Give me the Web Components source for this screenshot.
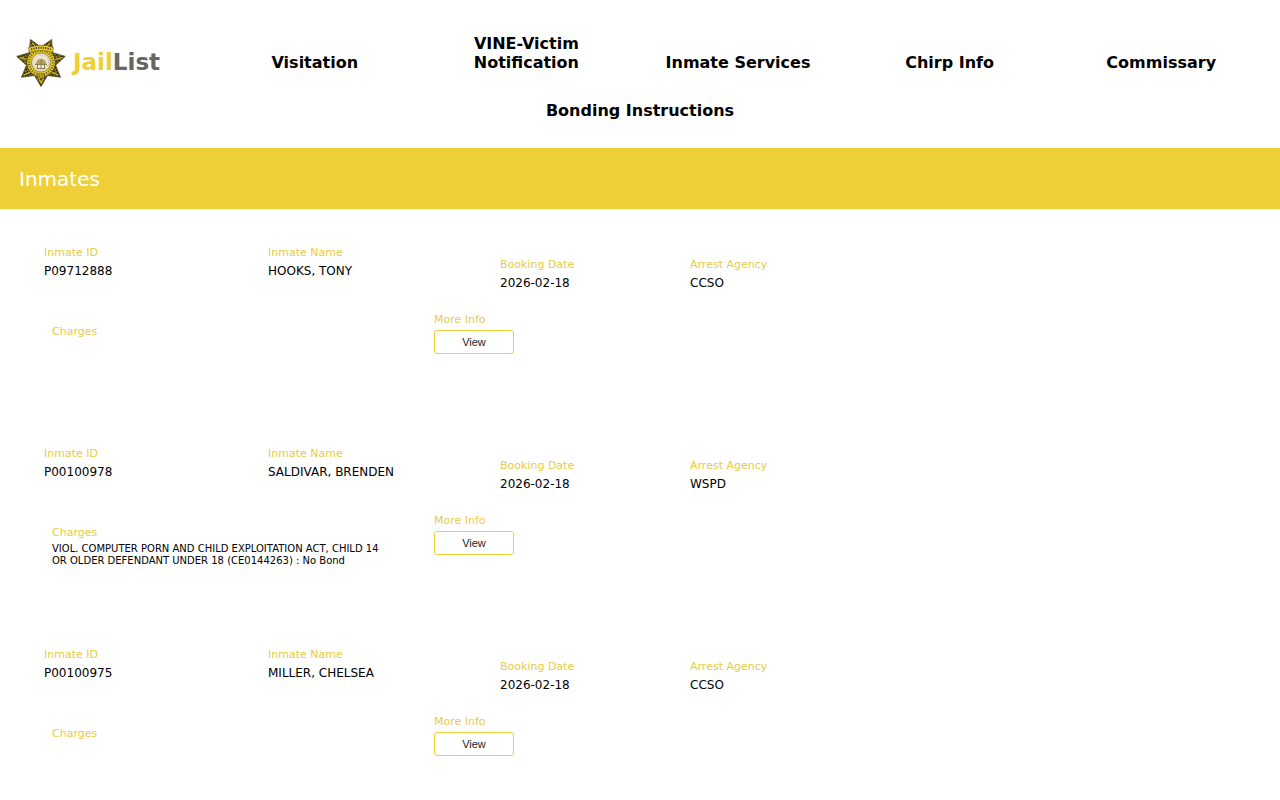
<!DOCTYPE html>
<html lang="en">
<head>
<meta charset="utf-8">
<meta name="viewport" content="width=device-width, initial-scale=1">
<title>JailList</title>
<style>
    body {
        margin: 0;
        background: #fff;
        color: #000;
        font-family: Verdana, "DejaVu Sans", sans-serif;
        --main-color: #eecf37;
        --label-color: #e8cb45;
    }
</style>
</head>
<body>
    <jail-header>
        <a href="#visitation">Visitation</a>
        <a href="#vine">VINE-Victim Notification</a>
        <a href="#services">Inmate Services</a>
        <a href="#chirp">Chirp Info</a>
        <a href="#commissary">Commissary</a>
        <a href="#bonding" class="wide">Bonding Instructions</a>
    </jail-header>
    <title-bar>Inmates</title-bar>
    <main>
        <inmate-card inmate-id="P09712888" name="HOOKS, TONY" date="2026-02-18" agency="CCSO"></inmate-card>
        <inmate-card inmate-id="P00100978" name="SALDIVAR, BRENDEN" date="2026-02-18" agency="WSPD">VIOL. COMPUTER PORN AND CHILD EXPLOITATION ACT, CHILD 14 OR OLDER DEFENDANT UNDER 18 (CE0144263) : No Bond</inmate-card>
        <inmate-card inmate-id="P00100975" name="MILLER, CHELSEA" date="2026-02-18" agency="CCSO"></inmate-card>
    </main>

<script>
class SheriffBadge extends HTMLElement {
    constructor() {
        super();
        this.attachShadow({ mode: 'open' });
        this.shadowRoot.innerHTML = `
            <style>
                :host { display: block; flex: none; width: 50px; height: 50px; }
                svg { display: block; width: 100%; height: 100%; }
            </style>
            <svg viewBox="0 0 50 50" aria-hidden="true">
                <defs>
                    <pattern id="grain" width="4" height="4" patternUnits="userSpaceOnUse" patternTransform="rotate(25)">
                        <rect width="4" height="4" fill="#37310f"/>
                        <path d="M0 1h2M2 3h2" stroke="#dcc632" stroke-width="1.2"/>
                    </pattern>
                </defs>
                <path fill="url(#grain)" stroke="#4a411a" stroke-width=".8" stroke-linejoin="round"
                    d="M25 49.5 31.5 38.5 44.5 40.2 39.6 28.3 49.2 19.4 36.7 15.7 35.6 2.5 25 10 14.4 2.5 13.3 15.7 .8 19.4 10.4 28.3 5.5 40.2 18.5 38.5Z"/>
                <path fill="none" stroke="#e3cc34" stroke-width="1"
                    d="M16 6l4 4M34 6l-4 4M4 20.5l7 2M46 20.5l-7 2M8 38l6-3M42 38l-6-3M22.5 41l2.5 5 2.5-5"/>
                <circle cx="25" cy="25.5" r="14.5" fill="#e3ca2e" stroke="#4d431a"/>
                <circle cx="25" cy="25.5" r="12" fill="none" stroke="#6b5e1c" stroke-width="2.6" stroke-dasharray="1 1.5"/>
                <circle cx="25" cy="25.5" r="9.5" fill="#ece7d6" stroke="#a08d30"/>
                <circle cx="25" cy="25.5" r="7.5" fill="none" stroke="#bdb7a6" stroke-width="1" stroke-dasharray="1 1"/>
                <path fill="#b5a25a" d="M19.5 27q1-5 5.5-5.500 4.500.5 5.500 5.500z"/>
                <path fill="none" stroke="#8c8050" stroke-width="1" d="M19 27.500h12M21.500 27.500v4M25 23v8.500M28.500 27.500v4M20.500 31.500h9"/>
                <path fill="#ead22f" stroke="#6b5e1c" stroke-width=".7" d="M12.5 10.500q12.500-4.500 25 0l-1 5q-11.500-4-23 0z"/>
                <path fill="none" stroke="#5d5218" stroke-width="2" stroke-dasharray="1.4 1" d="M15 12.500q10-3.500 20 0"/>
                <path fill="#e5cc2d" stroke="#5b5015" stroke-width=".7" d="M22 37h6v4h-6z"/>
                <path stroke="#51470f" stroke-width="1.5" stroke-dasharray="1 .7" d="M23 39h4"/>
            </svg>
        `;
    }
}

class JailHeader extends HTMLElement {
    constructor() {
        super();
        this.attachShadow({ mode: 'open' });
        this.shadowRoot.innerHTML = `
            ${this.getStyles()}
            <header>
                <a class="brand" href="#home">
                    <sheriff-badge></sheriff-badge>
                    <span><b>Jail</b>List</span>
                </a>
                <nav><slot></slot></nav>
            </header>
        `;
    }
    getStyles() {
        return `
            <style>
                :host { display: block; }
                header {
                    display: grid;
                    grid-template-columns: 196px repeat(5, 1fr);
                    row-gap: 23px;
                    align-items: end;
                    padding: 34px 13px 28px;
                }
                nav { display: contents; }
                .brand {
                    display: flex;
                    align-items: center;
                    gap: 7px;
                    height: 32px;
                    padding: 12px 3px 0;
                    color: #666;
                    font-size: 23px;
                    font-weight: bold;
                    line-height: 28px;
                    text-decoration: none;
                }
                .brand b { color: var(--main-color); }
                ::slotted(a) {
                    padding: 0 30px 6px;
                    color: #000;
                    font-size: 16px;
                    font-weight: bold;
                    line-height: 19px;
                    text-align: center;
                    text-decoration: none;
                }
                ::slotted(.wide) { grid-column: 1 / -1; padding: 0; }
            </style>
        `;
    }
}

class TitleBar extends HTMLElement {
    constructor() {
        super();
        this.attachShadow({ mode: 'open' });
        this.shadowRoot.innerHTML = `
            <style>
                :host { display: block; background: var(--main-color); color: #fff; }
                h1 { margin: 0; padding: 19px 19px 17px; font-size: 20px; font-weight: normal; line-height: 25px; }
            </style>
            <h1><slot></slot></h1>
        `;
    }
}

class InmateField extends HTMLElement {
    constructor() {
        super();
        this.attachShadow({ mode: 'open' });
        this.shadowRoot.innerHTML = `
            <style>
                :host { display: flex; flex-direction: column; align-items: flex-start; gap: 1px; font-size: 12px; line-height: 16px; }
                .label { color: var(--label-color); font-size: 11px; line-height: 18px; }
            </style>
            <div class="label"><slot name="label"></slot></div>
            <slot></slot>
        `;
    }
}

class InmateCard extends HTMLElement {
    constructor() {
        super();
        this.attachShadow({ mode: 'open' });
    }
    connectedCallback() {
        this.shadowRoot.innerHTML = this.getTemplate();
    }
    getTemplate() {
        return `
            ${this.getStyles()}
            <article>
                <div class="row">
                    <inmate-field><span slot="label">Inmate ID</span><span>${this.getAttribute('inmate-id')}</span></inmate-field>
                    <inmate-field><span slot="label">Inmate Name</span><span>${this.getAttribute('name')}</span></inmate-field>
                    <inmate-field class="low"><span slot="label">Booking Date</span><span>${this.getAttribute('date')}</span></inmate-field>
                    <inmate-field class="low"><span slot="label">Arrest Agency</span><span>${this.getAttribute('agency')}</span></inmate-field>
                </div>
                <div class="row details">
                    <inmate-field class="low charges"><span slot="label">Charges</span><span><slot></slot></span></inmate-field>
                    <inmate-field><label slot="label" for="view">More Info</label><button id="view" type="button">View</button></inmate-field>
                </div>
            </article>
        `;
    }
    getStyles() {
        return `
            <style>
                :host { display: block; }
                article {
                    box-sizing: border-box;
                    min-height: 201px;
                    padding: 35px 44px 20px;
                }
                .row {
                    display: grid;
                    grid-template-columns: 224px 232px 190px 1fr;
                }
                .details {
                    grid-template-columns: 336px 1fr;
                    column-gap: 46px;
                    margin-top: 20px;
                    padding-left: 8px;
                }
                .low { margin-top: 12px; }
                .charges { font-size: 10px; line-height: 12px; }
                button {
                    width: 80px;
                    height: 24px;
                    padding: 0;
                    border: 1px solid var(--main-color);
                    border-radius: 3px;
                    background: #fff;
                    color: #222;
                    font: 11px "Liberation Sans", Arial, sans-serif;
                }
            </style>
        `;
    }
}

customElements.define('sheriff-badge', SheriffBadge);
customElements.define('jail-header', JailHeader);
customElements.define('title-bar', TitleBar);
customElements.define('inmate-field', InmateField);
customElements.define('inmate-card', InmateCard);
</script>
</body>
</html>
